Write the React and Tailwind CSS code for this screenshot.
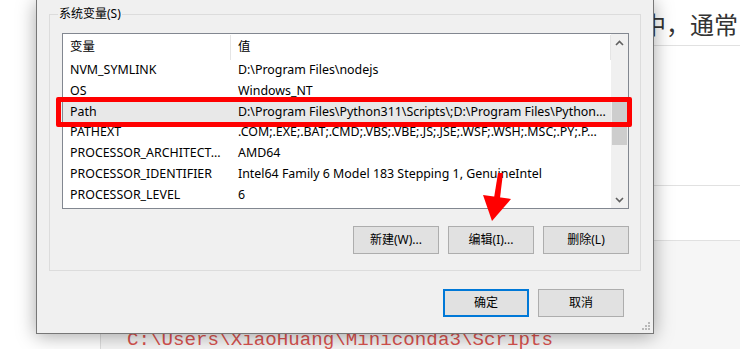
import React from 'react';

const rows = [
  ['NVM_SYMLINK', 'D:\\Program Files\\nodejs'],
  ['OS', 'Windows_NT'],
  ['Path', 'D:\\Program Files\\Python311\\Scripts\\;D:\\Program Files\\Python...'],
  ['PATHEXT', '.COM;.EXE;.BAT;.CMD;.VBS;.VBE;.JS;.JSE;.WSF;.WSH;.MSC;.PY;.P...'],
  ['PROCESSOR_ARCHITECT...', 'AMD64'],
  ['PROCESSOR_IDENTIFIER', 'Intel64 Family 6 Model 183 Stepping 1, GenuineIntel'],
  ['PROCESSOR_LEVEL', '6'],
];

const Chevron = ({ down }) => (
  <svg width="9" height="6" viewBox="0 0 9 6" className="block">
    <path d={down ? 'M1 1 L4.5 4.5 L8 1' : 'M1 5 L4.5 1.5 L8 5'} fill="none" stroke="#606060" strokeWidth="1.6" />
  </svg>
);

const WinButton = ({ children, primary }) => (
  <button
    className={
      'w-[86px] h-[28px] bg-[#e1e1e1] text-[12px] text-black flex items-center justify-center ' +
      (primary ? 'border-2 border-[#0078d7]' : 'border border-[#adadad]')
    }
  >
    {children}
  </button>
);

const VarList = () => (
  <div className="ml-[12px] mt-[18px] w-[567px] h-[176px] border border-[#828790] bg-white flex">
    <div className="w-[548px] flex flex-col">
      <div className="h-[26px] flex items-center shrink-0">
        <div className="w-[168px] h-[25px] pl-[7px] flex items-center border-r border-[#e5e5e5]">变量</div>
        <div className="flex-1 h-[25px] pl-[7px] flex items-center border-r border-[#e5e5e5]">值</div>
      </div>
      {rows.map(([name, value]) => (
        <div
          key={name}
          className={'h-[20.8px] flex items-center shrink-0 ' + (name === 'Path' ? 'bg-[#e8e8e8]' : '')}
        >
          <div className="w-[168px] pl-[7px] whitespace-nowrap overflow-hidden">{name}</div>
          <div className="flex-1 pl-[7px] whitespace-nowrap overflow-hidden">{value}</div>
        </div>
      ))}
    </div>
    <div className="w-[17px] bg-[#f0f0f0] flex flex-col">
      <div className="h-[17px] flex items-center justify-center">
        <Chevron />
      </div>
      <div className="flex-1 pt-[51px]">
        <div className="mx-[1px] h-[43px] bg-[#cdcdcd]" />
      </div>
      <div className="h-[17px] flex items-center justify-center">
        <Chevron down />
      </div>
    </div>
  </div>
);

const Dialog = () => (
  <div className="absolute left-[36px] top-0 w-[618px] h-[334px] bg-[#f0f0f0] border border-t-0 border-[#777777] shadow-[0_2px_18px_rgba(0,0,0,0.35)] flex flex-col text-[12.4px] text-black">
    <div className="relative mx-[12px] mt-[14px] h-[257px] border border-[#dcdcdc] flex flex-col">
      <span className="absolute left-[8px] -top-[8px] px-[1px] bg-[#f0f0f0] leading-[14px] text-[12px]">系统变量(S)</span>
      <VarList />
      <div className="mt-[17px] pr-[11px] flex justify-end gap-[9px]">
        <WinButton>新建(W)...</WinButton>
        <WinButton>编辑(I)...</WinButton>
        <WinButton>删除(L)</WinButton>
      </div>
    </div>
    <div className="mt-[18px] pr-[29px] flex justify-end gap-[9px]">
      <WinButton primary>确定</WinButton>
      <WinButton>取消</WinButton>
    </div>
    <svg width="10" height="10" viewBox="0 0 10 10" className="absolute right-[2px] bottom-[2px]">
      <rect x="7" y="1" width="2" height="2" fill="#b8b8b8" />
      <rect x="4" y="4" width="2" height="2" fill="#b8b8b8" />
      <rect x="7" y="4" width="2" height="2" fill="#b8b8b8" />
      <rect x="1" y="7" width="2" height="2" fill="#b8b8b8" />
      <rect x="4" y="7" width="2" height="2" fill="#b8b8b8" />
      <rect x="7" y="7" width="2" height="2" fill="#b8b8b8" />
    </svg>
  </div>
);

export default function App() {
  return (
    <div className="relative w-[740px] h-[349px] overflow-hidden bg-white font-['Noto_Sans','Noto_Sans_CJK_SC',sans-serif]">
      <div className="ml-[100px] h-full flex flex-col">
        <div className="h-[46px] shrink-0 border-b border-[#e1e1e1] flex justify-end pr-[2px] pt-[12px] text-[24px] leading-[24px] text-[#333] font-['Noto_Sans_CJK_SC',sans-serif]">
          中，通常
        </div>
        <div className="h-[140px] shrink-0 border-b border-[#e1e1e1]" />
        <div className="h-[55px] shrink-0 border-b border-[#e1e1e1]" />
        <div className="flex-1 bg-[#f6f6f6] border-l border-[#dddddd] pl-[26px] pt-[85px]">
          <pre className="m-0 font-['Liberation_Mono',monospace] text-[19.2px] leading-[28px] text-[#d9534f]">C:\Users\XiaoHuang\Miniconda3\Scripts</pre>
        </div>
      </div>

      <Dialog />

      <div className="absolute left-[56px] top-[97px] w-[576px] h-[30px] border-[5px] border-[#ff0000] rounded-[2px]" />

      <svg width="740" height="349" className="absolute left-0 top-0 pointer-events-none">
        <polygon points="498,173 503,173 500,198 494,198" fill="#ff0000" />
        <polygon points="483,195 511,199 492,221" fill="#ff0000" />
      </svg>
    </div>
  );
}
